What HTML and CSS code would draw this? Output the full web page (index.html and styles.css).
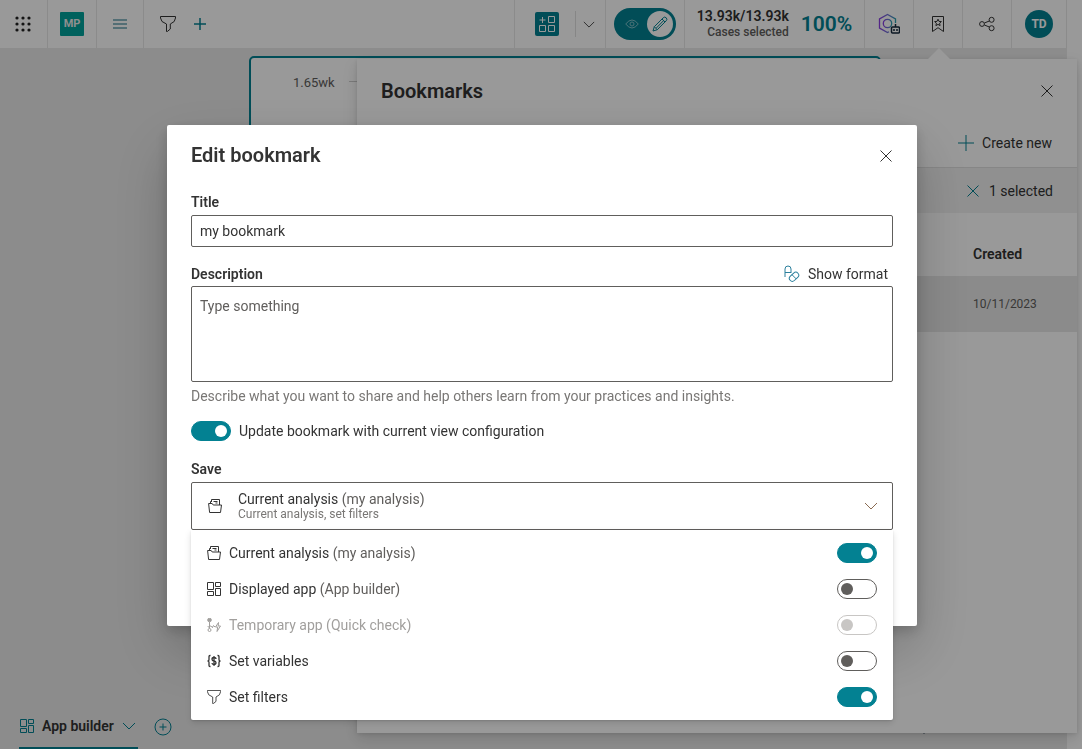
FILE: index.html
```
<!DOCTYPE html>
<html lang="en">
  <head>
    <meta charset="UTF-8" />
    <meta name="viewport" content="width=device-width, initial-scale=1" />
    <title>Edit bookmark</title>
    <link rel="stylesheet" href="styles.css">
  </head>
  <body>
    <!-- shared icons -->
    <svg class="sprite" aria-hidden="true">
      <symbol id="i-filter" viewBox="0 0 16 16"><path d="M.5.5h15v1.500q0 4-5.200 6v5L7.300 15.500H6.500V8Q.5 6 .5 2z" /></symbol>
      <symbol id="i-close" viewBox="0 0 12 12"><path d="M.5.5l11 11M11.500.5l-11 11" /></symbol>
      <symbol id="i-plus" viewBox="0 0 16 16"><path d="M8 0v16M0 8h16" /></symbol>
      <symbol id="i-chevron" viewBox="0 0 14 8"><path d="M1 1l6 6 6-6" /></symbol>
      <symbol id="i-app" viewBox="0 0 14 14"><path d="M.5.5h6v7h-6zM8.500.5h5v4h-5zM.5 9.500h6v4h-6zM8.500 6.500h5v7h-5z" /></symbol>
      <symbol id="i-folder" viewBox="0 0 14 14"><path d="M.6 4.500h3.600l1 1.500h8.300l-1 7.500H1.600zM2.500 4.500v-2h1.500M3.500 2.500v-2h8v5.500M5.500 2.500h4M7.500 4h2" /></symbol>
    </svg>

    <div class="app">
      <header class="topbar">
        <button class="cell" aria-label="Apps">
          <svg class="dots" width="16" height="16" viewBox="0 0 16 16">
            <circle cx="2" cy="2" r="1.600" /><circle cx="8" cy="2" r="1.600" /><circle cx="14" cy="2" r="1.600" />
            <circle cx="2" cy="8" r="1.600" /><circle cx="8" cy="8" r="1.600" /><circle cx="14" cy="8" r="1.600" />
            <circle cx="2" cy="14" r="1.600" /><circle cx="8" cy="14" r="1.600" /><circle cx="14" cy="14" r="1.600" />
          </svg>
        </button>
        <a class="cell" href="#"><span class="logo">MP</span></a>
        <button class="cell" aria-label="Menu">
          <svg class="menu-icon" width="14" height="10" viewBox="0 0 14 10"><path d="M0 1h14M0 5h14M0 9h14" /></svg>
        </button>
        <div class="filters">
          <button aria-label="Filters"><svg class="icon" width="16" height="16"><use href="#i-filter" /></svg></button>
          <button aria-label="Add filter"><svg class="icon teal add-filter" width="12" height="12"><use href="#i-plus" /></svg></button>
        </div>

        <div class="cell cell-add">
          <button class="add-component" aria-label="Add component">
            <svg width="18" height="18" viewBox="0 0 18 18"><path d="M4.500 2v6M1.500 5h6M10.500 1.500h6v6h-6zM1.500 10.500h6v6h-6zM10.500 10.500h6v6h-6z" /></svg>
          </button>
          <button class="more" aria-label="More components"><svg class="icon" width="12" height="7"><use href="#i-chevron" /></svg></button>
        </div>
        <div class="cell cell-mode">
          <button class="mode" aria-label="Edit mode">
            <svg class="eye" width="14" height="10" viewBox="0 0 14 10"><path d="M.7 5Q7-3 13.300 5Q7 13 .7 5z" /><circle cx="7" cy="5" r="2" /></svg>
            <span class="mode-knob">
              <svg class="icon teal" width="16" height="16" viewBox="0 0 16 16"><path d="M1 15l1.300-4.300L11.200 1.800q1.500-1.500 3 0t0 3L5.300 13.700zM2.300 10.700l3 3M10 3l3 3M4.200 12.200l7.300-7.500" /></svg>
            </span>
          </button>
        </div>
        <div class="cell cell-cases">
          <div class="cases">
            <strong>13.93k/13.93k</strong>
            <span>Cases selected</span>
          </div>
          <span class="percent">100%</span>
        </div>
        <button class="cell" aria-label="Assistant">
          <svg class="assistant" width="22" height="22" viewBox="0 0 22 22">
            <defs>
              <linearGradient id="hex" x1="0" y1="0" x2="1" y2="0"><stop offset="0" stop-color="#8a3fe2" /><stop offset=".6" stop-color="#6a78d0" /><stop offset="1" stop-color="#2ba0b0" /></linearGradient>
            </defs>
            <path class="hex" d="M17.500 10V6L9.500 1.500 1.500 6v9l8 4.500 1.500-.8" />
            <circle class="hex" cx="9.500" cy="10.500" r="4.200" />
            <path class="bot" d="M17.500 11v3M14.500 14h6q1 0 1 1v4q0 1-1 1h-6q-1 0-1-1v-4q0-1 1-1zM16 16v2M19 16v2" />
          </svg>
        </button>
        <button class="cell" aria-label="Bookmarks">
          <svg class="icon" width="14" height="18" viewBox="0 0 14 18"><path d="M1.500 1.500h11v15L7 12.700 1.500 16.500zM7 4.200l1 2.200 2.400.2-1.800 1.600.5 2.400L7 9.400l-2.100 1.200.5-2.400-1.800-1.600 2.400-.2z" /></svg>
        </button>
        <button class="cell" aria-label="Share">
          <svg class="icon" width="16" height="16" viewBox="0 0 16 16"><circle cx="3" cy="8" r="2.400" /><circle cx="12.600" cy="3.800" r="2.500" /><circle cx="12.600" cy="12.200" r="2.500" /><path d="M5.400 7l4.900-2M5.400 9l4.900 2" /></svg>
        </button>
        <button class="cell cell-user" aria-label="Account"><span class="avatar">TD</span></button>
      </header>

      <main class="canvas">
        <section class="chart">
          <span>1.65wk</span>
          <i></i>
        </section>
      </main>

      <footer class="tabs">
        <button class="tab">
          <svg class="icon teal" width="14" height="14"><use href="#i-app" /></svg>
          App builder
          <svg class="icon teal" width="14" height="8"><use href="#i-chevron" /></svg>
        </button>
        <button aria-label="Add tab">
          <svg class="icon teal" width="18" height="18" viewBox="0 0 18 18"><circle cx="9" cy="9" r="8" /><path d="M9 5.500v7M5.500 9h7" /></svg>
        </button>
        <svg class="status" width="136" height="12" viewBox="0 0 136 12" aria-hidden="true"><circle cx="5" cy="6" r="4" /><path d="M16.500 2v8" /><circle cx="133" cy="6" r="3" /></svg>
      </footer>

      <aside class="panel">
        <div class="panel-head">
          <h2>Bookmarks</h2>
          <button aria-label="Close bookmarks"><svg class="icon" width="12" height="12"><use href="#i-close" /></svg></button>
        </div>
        <div class="panel-row">
          <button><svg class="icon teal" width="16" height="16"><use href="#i-plus" /></svg>Create new</button>
        </div>
        <div class="panel-row selection">
          <button><svg class="icon teal" width="12" height="12"><use href="#i-close" /></svg>1 selected</button>
        </div>
        <table class="bookmarks">
          <thead>
            <tr><th>Created</th></tr>
          </thead>
          <tbody>
            <tr><td>10/11/2023</td></tr>
          </tbody>
        </table>
      </aside>
    </div>

    <div class="overlay">
      <form class="modal" role="dialog" aria-labelledby="modalTitle">
        <div class="modal-head">
          <h1 id="modalTitle">Edit bookmark</h1>
          <button type="button" aria-label="Close"><svg class="icon" width="12" height="12"><use href="#i-close" /></svg></button>
        </div>

        <div class="form-group">
          <label for="title">Title</label>
          <input class="field" id="title" name="title" type="text" value="my bookmark" />
        </div>

        <div class="form-group">
          <div class="label-row">
            <label for="description">Description</label>
            <button type="button" class="format">
              <svg class="icon format-icon" width="16" height="18" viewBox="0 0 16 18"><path d="M1 12V4q0-3 3-3t3 3v4M1 7.500h6" /><rect x="4.800" y="8.800" width="10.500" height="6" rx="3" transform="rotate(-42 10 11.800)" /><path d="M8 9.700l4.200 4.200" /></svg>
              Show format
            </button>
          </div>
          <textarea class="field" id="description" name="description" placeholder="Type something"></textarea>
          <p class="hint">Describe what you want to share and help others learn from your practices and insights.</p>
        </div>

        <label class="update"><input class="switch" type="checkbox" name="update" checked /> Update bookmark with current view configuration</label>

        <div class="save">
          <label for="save">Save</label>
          <button type="button" class="field select" id="save" aria-haspopup="true" aria-expanded="true">
            <svg class="icon" width="14" height="14"><use href="#i-folder" /></svg>
            <span class="select-text">
              <span>Current analysis <em>(my analysis)</em></span>
              <small>Current analysis, set filters</small>
            </span>
            <svg class="icon arrow" width="14" height="8"><use href="#i-chevron" /></svg>
          </button>

          <div class="options">
            <label class="option">
              <svg class="icon" width="14" height="14"><use href="#i-folder" /></svg>
              <span>Current analysis <em>(my analysis)</em></span>
              <input class="switch" type="checkbox" name="analysis" checked />
            </label>
            <label class="option">
              <svg class="icon" width="14" height="14"><use href="#i-app" /></svg>
              <span>Displayed app <em>(App builder)</em></span>
              <input class="switch" type="checkbox" name="app" />
            </label>
            <label class="option disabled">
              <svg class="icon" width="14" height="14" viewBox="0 0 14 14"><circle class="solid" cx="2.500" cy="2" r="1.800" /><circle cx="2.500" cy="12" r="1.500" /><path d="M2.500 4v6.500M2.500 7.500L6 9.500M.7 8l1.800 2M5.500 9.500L6.500 7.500 8 9M11.500 4.500L8.500 9h2.200L10 13.500l3.500-5.500h-2.300z" /></svg>
              <span>Temporary app <em>(Quick check)</em></span>
              <input class="switch" type="checkbox" name="temporary" disabled />
            </label>
            <label class="option">
              <svg class="icon" width="14" height="14" viewBox="0 0 14 14"><path class="bold" d="M3.500 1.500H3q-1 0-1 1V5.500Q2 7 .5 7 2 7 2 8.500v3q0 1 1 1h.5M10.500 1.500h.5q1 0 1 1v3Q12 7 13.500 7 12 7 12 8.500v3q0 1-1 1h-.5M9 5Q9 3.500 7 3.500T5 5.200 7 7t2 1.800-2 1.700T5 9M7 2v10" /></svg>
              <span>Set variables</span>
              <input class="switch" type="checkbox" name="variables" />
            </label>
            <label class="option">
              <svg class="icon" width="14" height="14"><use href="#i-filter" /></svg>
              <span>Set filters</span>
              <input class="switch" type="checkbox" name="filters" checked />
            </label>
          </div>
        </div>
      </form>
    </div>
  </body>
</html>
```

FILE: styles.css
```
* {
  box-sizing: border-box;
}
body {
  margin: 0;
  background: #fff;
  color: #333;
  font: 14px/20px Roboto, sans-serif;
}
h1, h2, p {
  margin: 0;
}
h1, h2 {
  font-size: 20px;
  line-height: 28px;
  font-weight: 600;
}
button, input, textarea {
  font: inherit;
  color: inherit;
}
button {
  display: flex;
  align-items: center;
  padding: 0;
  border: none;
  background: none;
  cursor: pointer;
}
em {
  font-style: normal;
  color: #605e5c;
}
.sprite {
  position: absolute;
  width: 0;
  height: 0;
}
.icon {
  flex: none;
  fill: none;
  stroke: #333;
  stroke-width: 1;
}
.icon.teal {
  stroke: #038192;
}
.icon.add-filter {
  stroke-width: 2;
}
.solid {
  fill: currentColor;
}
.bold {
  stroke-width: 1.300;
}

/* application behind the dialog */
.app {
  position: relative;
  display: flex;
  flex-direction: column;
  height: 100vh;
  margin-right: 15px;
  background: #eaeaea;
}
.topbar {
  display: flex;
  height: 48px;
  background: #fff;
}
.cell {
  display: flex;
  align-items: center;
  justify-content: center;
  width: 49px;
  border-right: 1px solid #e8e8e8;
  text-decoration: none;
}
.cell:first-child {
  width: 48px;
  padding-right: 1px;
}
.cell:nth-child(3) {
  width: 47px;
}
.dots {
  fill: #222;
}
.logo {
  width: 24px;
  border-radius: 1px;
  background: #00a29b;
  color: #eee;
  font-size: 11px;
  line-height: 24px;
  font-weight: 700;
  text-align: center;
}
.menu-icon {
  stroke: #8ab8c4;
  stroke-width: 2;
}
.filters {
  display: flex;
  flex: 1;
  gap: 18px;
  padding-left: 16px;
}
.cell-add {
  width: 92px;
  border-left: 1px solid #e8e8e8;
}
.add-component {
  justify-content: center;
  width: 24px;
  height: 24px;
  margin: 0 16px 0 14px;
  border-radius: 2px;
  background: #038192;
}
.add-component svg {
  fill: none;
  stroke: #fff;
}
.more {
  height: 26px;
  padding: 0 4px 0 7px;
  border-left: 1px solid #e0e0e0;
}
.cell-mode {
  width: 79px;
}
.mode {
  justify-content: space-between;
  width: 62px;
  height: 32px;
  padding: 0 3px 0 11px;
  border-radius: 16px;
  background: #038192;
}
.eye {
  fill: none;
  stroke: #7fc0c9;
}
.mode-knob {
  display: flex;
  align-items: center;
  justify-content: center;
  width: 26px;
  height: 26px;
  border-radius: 50%;
  background: #fff;
}
.cell-cases {
  gap: 12px;
  width: 180px;
}
.cases {
  display: flex;
  flex-direction: column;
  text-align: right;
  font-weight: 500;
}
.cases strong {
  font-weight: 600;
  line-height: 16px;
}
.cases span {
  color: #605e5c;
  font-size: 12px;
  line-height: 16px;
}
.percent {
  color: #038192;
  font-size: 21px;
  font-weight: 600;
}
.hex {
  fill: none;
  stroke: url(#hex);
  stroke-width: 1.300;
}
.bot {
  fill: none;
  stroke: #14283c;
  stroke-width: 1.500;
}
.cell-user {
  width: 55px;
}
.avatar {
  width: 28px;
  border-radius: 50%;
  background: #038192;
  color: #fff;
  font-size: 12px;
  line-height: 28px;
  font-weight: 700;
}
.canvas {
  flex: 1;
  padding: 8px 186px 0 249px;
}
.chart {
  display: flex;
  justify-content: space-between;
  height: 420px;
  padding: 15px 522px 0 42px;
  border: 2px solid #038192;
  border-radius: 5px;
  background: #fff;
  color: #605e5c;
  font-size: 13px;
}
.chart i {
  width: 8px;
  height: 1px;
  margin-top: 8px;
  background: #ccc;
}
.tabs {
  display: flex;
  gap: 16px;
  height: 44px;
  padding-left: 19px;
}
.tab {
  gap: 8px;
  padding: 0 2px 0 1px;
  border-bottom: 2px solid #038192;
  font-weight: 600;
}
.status {
  margin: 18px 12px 0 auto;
  fill: #14283c;
  stroke: #14283c;
}
.panel {
  position: absolute;
  top: 59px;
  right: -10px;
  bottom: 16px;
  width: 720px;
  background: #fff;
  box-shadow: 0 6px 14px rgba(0, 0, 0, 0.13), 0 1px 4px rgba(0, 0, 0, 0.11);
}
.panel::before {
  content: "";
  position: absolute;
  right: 127px;
  bottom: 100%;
  border: 11px solid transparent;
  border-top: none;
  border-bottom-color: #fff;
}
.panel-head {
  display: flex;
  justify-content: space-between;
  padding: 18px 24px 14px;
}
.panel-row {
  display: flex;
  justify-content: flex-end;
  height: 48px;
  padding-right: 25px;
}
.panel-row button {
  gap: 8px;
}
.selection {
  height: 46px;
  padding-right: 24px;
  border-top: 1px solid #e0e0e0;
  background: #f1f1f1;
}
.selection button {
  gap: 10px;
}
.bookmarks {
  width: 100%;
  border-collapse: collapse;
  text-align: left;
}
.bookmarks th, .bookmarks td {
  padding: 18px 0 0 616px;
  font-weight: 600;
}
.bookmarks th {
  height: 63px;
}
.bookmarks td {
  height: 56px;
  padding-top: 0;
  background: #e8e8e8;
  color: #605e5c;
  font-size: 12px;
  font-weight: 400;
}

/* dialog */
.overlay {
  position: fixed;
  inset: 0;
  display: flex;
  align-items: center;
  justify-content: center;
  padding: 2px 0 0 2px;
  background: rgba(0, 0, 0, 0.4);
}
.modal {
  width: 750px;
  padding: 16px 24px 96px;
  border-radius: 2px;
  background: #fff;
  box-shadow: 0 25px 58px rgba(0, 0, 0, 0.22), 0 5px 14px rgba(0, 0, 0, 0.18);
}
.modal-head {
  display: flex;
  justify-content: space-between;
  margin-bottom: 23px;
}
.modal-head button {
  padding: 2px 1px 0 0;
}
.form-group {
  margin-bottom: 16px;
}
.form-group label, .save > label {
  display: block;
  font-weight: 600;
}
.form-group > label {
  padding-bottom: 3px;
}
.field {
  display: block;
  width: 100%;
  border: 1px solid #605e5c;
  border-radius: 2px;
  background: #fff;
  outline: none;
}
input.field {
  height: 32px;
  padding: 0 8px;
}
textarea.field {
  height: 96px;
  padding: 9px 8px;
  resize: none;
}
textarea::placeholder {
  color: #605e5c;
}
.label-row {
  display: flex;
  justify-content: space-between;
  height: 23px;
}
.label-row label {
  padding-top: 1px;
}
.format {
  gap: 8px;
  height: 22px;
  padding-right: 5px;
}
.format-icon {
  stroke: #2a7f9c;
}
.hint {
  padding-top: 4px;
  color: #797775;
}
.update {
  display: flex;
  align-items: center;
  gap: 8px;
  margin: -1px 0 18px;
}
.save {
  position: relative;
}
.save > label {
  padding-bottom: 3px;
}
.select {
  display: flex;
  height: 48px;
  padding: 0 14px 0 16px;
  text-align: left;
}
.select-text {
  display: flex;
  flex: 1;
  flex-direction: column;
  padding-left: 16px;
  line-height: 16px;
}
.select-text small {
  color: #797775;
  font-size: 12px;
  line-height: 14px;
}
.arrow {
  stroke: #8a6a50;
}
.options {
  position: absolute;
  top: 100%;
  left: 0;
  right: 0;
  padding: 5px 16px;
  border-radius: 0 0 2px 2px;
  background: #fff;
  box-shadow: 0 3px 7px rgba(0, 0, 0, 0.13), 0 1px 2px rgba(0, 0, 0, 0.11);
}
.option {
  display: flex;
  align-items: center;
  gap: 8px;
  height: 36px;
}
.option span {
  flex: 1;
}
.option.disabled, .disabled em {
  color: #a19f9d;
}
.disabled .icon {
  stroke: #a19f9d;
}
.switch {
  flex: none;
  width: 40px;
  height: 20px;
  margin: 0;
  padding: 3px;
  border: 1px solid #605e5c;
  border-radius: 10px;
  background: #fff;
  appearance: none;
}
.switch::before {
  content: "";
  display: block;
  width: 12px;
  height: 12px;
  border-radius: 50%;
  background: #605e5c;
}
.switch:checked {
  border-color: #038192;
  background: #038192;
}
.switch:checked::before {
  margin-left: auto;
  background: #fff;
}
.switch:disabled {
  border-color: #c8c6c4;
}
.switch:disabled::before {
  background: #c8c6c4;
}
```
